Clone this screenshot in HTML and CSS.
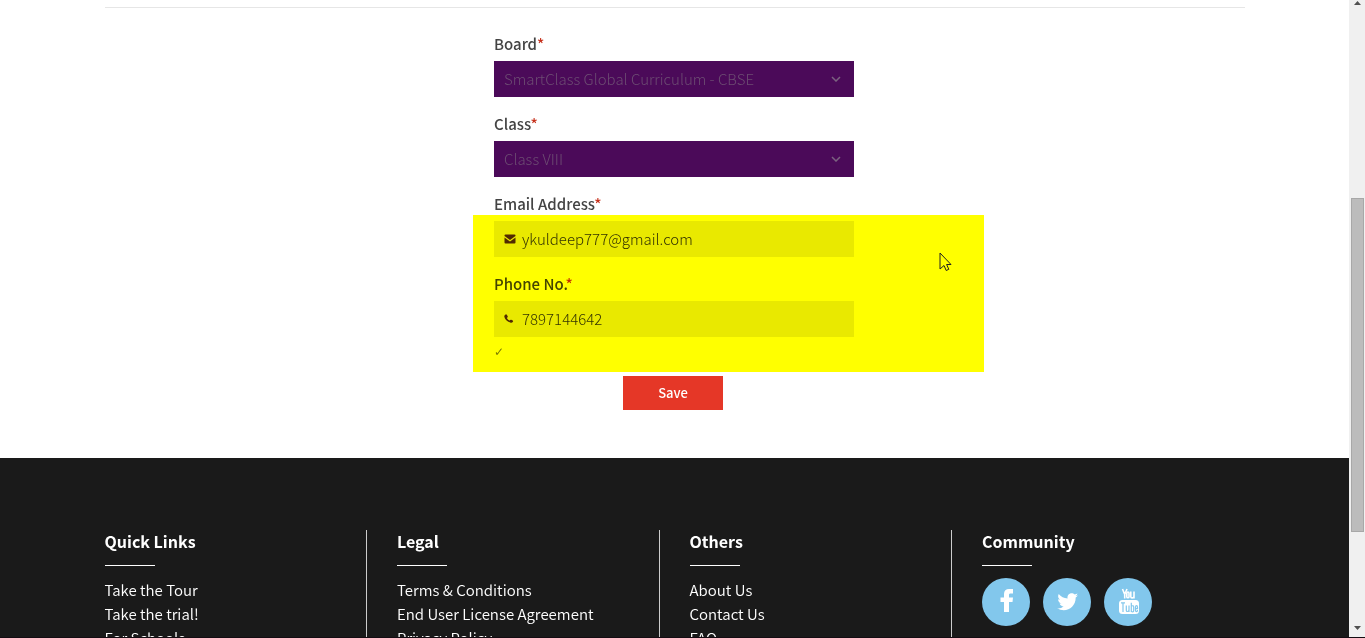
FILE: index.html
```html
<!DOCTYPE html>
<html lang="en">
<head>
<meta charset="utf-8">
<title>Edit Profile</title>
<link rel="stylesheet" href="styles.css">
</head>
<body class="window">
<div class="page">
  <main class="container main">
    <hr class="rule">
    <form class="form">
      <div class="field">
        <label class="label" for="board">Board<span class="required">*</span></label>
        <div class="control">
          <select class="input select" id="board"><option>SmartClass Global Curriculum - CBSE</option></select>
          <svg class="chevron" viewBox="0 0 10 6" aria-hidden="true"><path d="M1 1l4 4 4-4"/></svg>
        </div>
      </div>
      <div class="field">
        <label class="label" for="class">Class<span class="required">*</span></label>
        <div class="control">
          <select class="input select" id="class"><option>Class VIII</option></select>
          <svg class="chevron" viewBox="0 0 10 6" aria-hidden="true"><path d="M1 1l4 4 4-4"/></svg>
        </div>
      </div>
      <div class="field">
        <label class="label" for="email">Email Address<span class="required">*</span></label>
        <div class="control">
          <svg class="field-icon" viewBox="0 0 12 12" aria-hidden="true"><path d="M1.500 1.500h9q1 0 1 1v.500L6 7 .500 3v-.500q0-1 1-1zM.500 4.500L6 8.400l5.500-3.900v5q0 1-1 1h-9q-1 0-1-1z"/></svg>
          <input class="input with-icon" id="email" type="email" value="ykuldeep777@gmail.com">
        </div>
      </div>
      <div class="field last">
        <label class="label" for="phone">Phone No.<span class="required">*</span></label>
        <div class="control">
          <svg class="field-icon" viewBox="0 0 12 12" aria-hidden="true"><path d="M1.200 1.700Q2.300 1 2.800 1.800L3.700 3.300q.300.700-.300 1.100l-.600.500Q4 6.900 5.700 7.600l.500-.600q.500-.500 1.100-.200L8.700 7.500q.700.500.200 1.300Q8 10.200 6.200 9.600 1.500 8 .300 3.700.200 2.300 1.200 1.700z"/></svg>
          <input class="input with-icon" id="phone" type="tel" value="7897144642">
        </div>
      </div>
      <div class="valid">✓</div>
      <button class="save" type="button">Save</button>
      <div class="highlight">
        <svg class="cursor" viewBox="0 0 13 20" aria-hidden="true"><path d="M1 1v16l4-3.500 2.200 5 2.600-1.200L7.600 12.500H12z"/></svg>
      </div>
    </form>
  </main>
  <footer class="footer">
    <div class="container columns">
      <section class="column">
        <h2 class="heading">Quick Links</h2>
        <ul class="links">
          <li><a href="#">Take the Tour</a></li>
          <li><a href="#">Take the trial!</a></li>
          <li><a href="#">For Schools</a></li>
        </ul>
      </section>
      <section class="column">
        <h2 class="heading">Legal</h2>
        <ul class="links">
          <li><a href="#">Terms &amp; Conditions</a></li>
          <li><a href="#">End User License Agreement</a></li>
          <li><a href="#">Privacy Policy</a></li>
        </ul>
      </section>
      <section class="column">
        <h2 class="heading">Others</h2>
        <ul class="links">
          <li><a href="#">About Us</a></li>
          <li><a href="#">Contact Us</a></li>
          <li><a href="#">FAQ</a></li>
        </ul>
      </section>
      <section class="column">
        <h2 class="heading">Community</h2>
        <div class="social">
          <a class="circle" href="#" aria-label="Facebook"><svg viewBox="0 0 48 48"><path d="M22 34V24h-3.500v-4.500H22V16c0-3.300 2-5 5-5h4v4.500h-2.500c-1 0-1.500.500-1.500 1.500v2.500h4l-.500 4.500H27v10z"/></svg></a>
          <a class="circle" href="#" aria-label="Twitter"><svg viewBox="0 0 48 48"><path d="M35 17.300a9 9 0 0 1-2.400.700 4.300 4.300 0 0 0 1.900-2.400 8 8 0 0 1-2.700 1c-3-3.200-8.200-.700-7.200 3.900-3.600-.200-6.700-1.900-8.900-4.500-1.200 2.200-.500 4.500 1.300 5.700l-1.900-.500c0 2 1.300 3.800 3.400 4.200l-1.900.100c.500 1.700 2.100 2.900 4 3A9 9 0 0 1 14 30.300c8.500 5 18.800-.300 18.700-10.700a8 8 0 0 0 2.300-2.300z"/></svg></a>
          <a class="circle" href="#" aria-label="YouTube"><svg viewBox="0 0 48 48"><path class="stroke" d="M18.500 11l2.200 5.500L23 11M20.700 16v4.500M30 13.500V20.500M26.800 13.500v5.200q0 1.200 1.200 1.200t2-1.200"/><rect class="stroke" x="22.800" y="14" width="2.200" height="5.800" rx="1.100"/><rect x="15" y="22" width="20" height="14" rx="3.500"/><path class="cut" d="M17 24.800h4M19 24.800V34M22.300 27.500v5q0 1 1 1t1.700-1.200M25 27.500V34M27.300 24.800V34M27.300 28.200q2.400-1.200 2.400.800v3.500q0 2-2.400 1M31.500 30.700h2v-1.500q0-1.500-1-1.500t-1 1.500v3q0 1.500 1 1.500t1-1.700"/></svg></a>
        </div>
      </section>
    </div>
  </footer>
</div>
<div class="scrollbar" aria-hidden="true">
  <svg class="arrow" viewBox="0 0 7 4"><path d="M0 4L3.500 0 7 4z"/></svg>
  <div class="track"><div class="thumb"></div></div>
  <svg class="arrow" viewBox="0 0 7 4"><path d="M0 0l3.500 4L7 0z"/></svg>
</div>
</body>
</html>
```
FILE: styles.css
```css
* { box-sizing: border-box; }

.window {
  display: flex;
  height: 100vh;
  margin: 0;
  overflow: hidden;
  border-bottom: 1px solid #140c12;
  background: #fff;
  color: #444;
  font-family: "Noto Sans CJK SC", "Open Sans", sans-serif;
  font-size: 15px;
  line-height: 24px;
}

.page {
  flex: 1;
  display: flex;
  flex-direction: column;
  min-width: 0;
  overflow: hidden;
}

.container {
  width: 100%;
  max-width: 1140px;
  margin: 0 auto;
}

.main { padding: 7px 0 48px; }

.rule {
  height: 1px;
  margin: 0 0 24px;
  border: 0;
  background: #e6e6e6;
}

.form {
  position: relative;
  display: flex;
  flex-direction: column;
  width: 361px;
  margin: 0 auto;
  padding-right: 1px;
}

.field { margin-bottom: 15px; }

.last { margin-bottom: 3px; }

.label {
  display: block;
  height: 29px;
  font-weight: 500;
}

.required { color: #c62f1a; }

.control { position: relative; }

.input {
  display: block;
  width: 100%;
  height: 36px;
  padding: 0 10px;
  border: 0;
  border-radius: 0;
  background: #e9e9e9;
  color: #333;
  font: inherit;
  font-weight: 300;
}

.with-icon { padding: 0 10px 2px 28px; }

.select {
  appearance: none;
  background: #4b0a59;
  color: #6c4c72;
}

.chevron {
  position: absolute;
  top: 15px;
  right: 13px;
  width: 10px;
  height: 6px;
  fill: none;
  stroke: #7b6280;
  stroke-width: 1.500;
}

.field-icon {
  position: absolute;
  top: 12px;
  left: 10px;
  width: 12px;
  height: 12px;
  fill: #502a10;
}

.valid {
  height: 36px;
  color: #7a7a5a;
  font-family: "DejaVu Sans", sans-serif;
  font-size: 12px;
}

.save {
  align-self: center;
  width: 100px;
  height: 34px;
  margin-right: 2px;
  padding: 0 0 1px;
  border: 0;
  background: #e53727;
  color: #fff;
  font: inherit;
  font-size: 13px;
  font-weight: 500;
}

/* Marker drawn over the contact fields */
.highlight {
  position: absolute;
  top: 183px;
  left: -21px;
  width: 511px;
  height: 157px;
  background: #ff0;
  mix-blend-mode: multiply;
  pointer-events: none;
}

.cursor {
  position: absolute;
  top: 37px;
  right: 32px;
  width: 13px;
  height: 20px;
  fill: #ff0;
  stroke: #222;
}

.footer {
  flex: 1 0 auto;
  padding-top: 72px;
  background: #1a1a1a;
  color: #fff;
}

.columns {
  display: grid;
  grid-template-columns: repeat(4, 1fr);
  gap: 30px;
}

.column {
  height: 160px;
  border-right: 1px solid #ccc;
}

.column:last-child { border-right: 0; }

.heading {
  margin: 0 0 12px;
  font-size: 16px;
  font-weight: 700;
  line-height: 22px;
}

.heading::after {
  content: "";
  display: block;
  width: 50px;
  height: 1px;
  margin-top: 13px;
  background: #fff;
}

.links {
  margin: 0;
  padding: 0;
  font-weight: 350;
  list-style: none;
}

.links a {
  color: #fff;
  text-decoration: none;
}

.social {
  display: flex;
  gap: 13px;
}

.circle {
  width: 48px;
  height: 48px;
  border-radius: 50%;
  background: #82c7ec;
}

.circle svg {
  display: block;
  fill: #fff;
}

.circle .stroke {
  fill: none;
  stroke: #fff;
  stroke-width: 1.600;
}

.circle .cut {
  fill: none;
  stroke: #82c7ec;
  stroke-width: 1.200;
}

.scrollbar {
  display: flex;
  flex-direction: column;
  align-items: center;
  width: 16px;
  padding: 1px 1px 7px 2px;
  background: #f0f0f0;
}

.arrow {
  width: 7px;
  height: 4px;
  fill: #505050;
}

.track {
  flex: 1;
  width: 100%;
  padding-top: 193px;
}

.thumb {
  height: 334px;
  border: 1px solid #a8a8a8;
  background: #bcbcbc;
}
```
